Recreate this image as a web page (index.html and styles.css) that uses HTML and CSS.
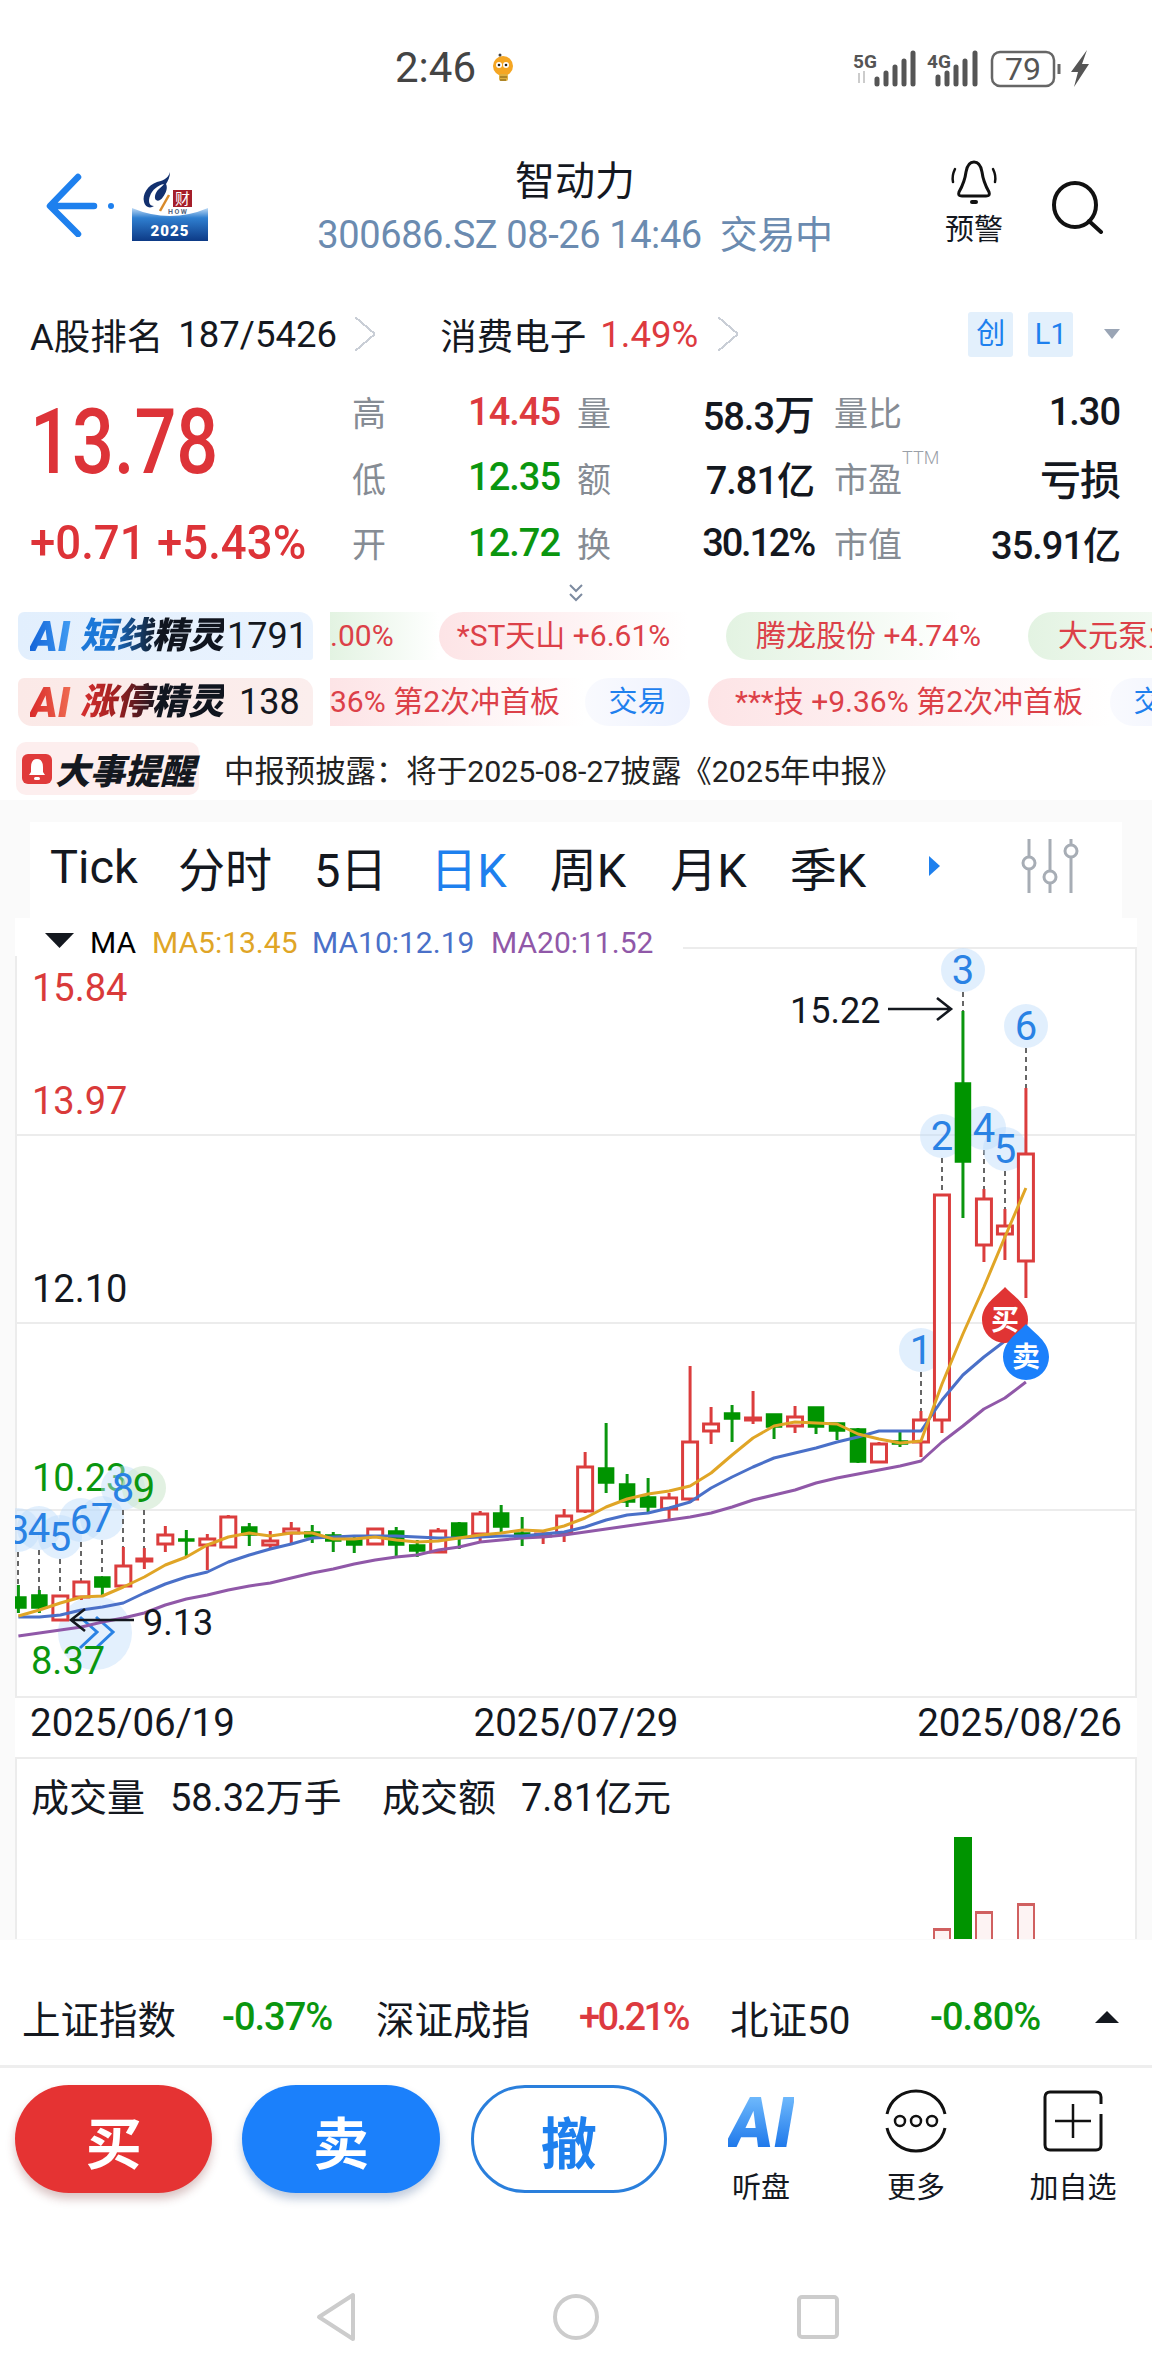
FILE: index.html
```html
<!DOCTYPE html>
<html lang="zh">
<head>
    <meta charset="UTF-8">
    <meta name="viewport" content="width=device-width, initial-scale=1.0">
    <title>智动力</title>
    <link rel="stylesheet" href="styles.css">
</head>
<body>
    <div class="status">
        <span class="time">2:46</span>
        <svg class="bee" width="24" height="30" viewBox="0 0 24 30">
            <circle cx="12" cy="13" r="10" fill="#f5a623"/>
            <rect x="8" y="21" width="9" height="7" rx="2" fill="#e0b040"/>
            <path d="M9 24h7M9 27h6" stroke="#7a5a10" stroke-width="1.2"/>
            <circle cx="8" cy="12" r="3" fill="#fff"/>
            <circle cx="15" cy="12" r="3" fill="#fff"/>
            <circle cx="8" cy="12" r="1.3" fill="#222"/>
            <circle cx="15" cy="12" r="1.3" fill="#222"/>
            <circle cx="9" cy="2" r="1.5" fill="#444"/>
        </svg>
        <svg class="sys" width="240" height="42" viewBox="853 46 240 42">
            <text class="net" x="853" y="67">5G</text>
            <path d="M859 72v10M864 70v12" stroke="#ccc" stroke-width="2"/>
            <path d="M877 78v5M886 72v11M895 66v17M904 60v23M913 52v31" stroke="#555" stroke-width="5" stroke-linecap="round"/>
            <text class="net" x="927" y="67">4G</text>
            <path d="M938 76v7M947 72v11M956 66v17M965 60v23M975 52v31" stroke="#555" stroke-width="5" stroke-linecap="round"/>
            <rect x="992" y="51" width="62" height="34" rx="8" fill="none" stroke="#666" stroke-width="2.5"/>
            <text class="batt" x="1023" y="79">79</text>
            <path d="M1059 63v10" stroke="#666" stroke-width="3"/>
            <path d="M1087 49l-16 22h7l-4 15 15-23h-7z" fill="#555"/>
        </svg>
    </div>

    <header class="top">
        <svg class="back" width="84" height="64" viewBox="0 0 84 64">
            <path d="M32 4L4 33l28 28M6 33h42" fill="none" stroke="#1e80ee" stroke-width="6.5" stroke-linecap="round" stroke-linejoin="round"/>
            <circle cx="65" cy="33" r="3" fill="#1e80ee"/>
        </svg>
        <svg class="logo" width="76" height="72" viewBox="0 0 76 72">
            <defs>
                <linearGradient id="logoBlue" x1="0" y1="0" x2="0" y2="1">
                    <stop offset="0" stop-color="#bcd9f5"/>
                    <stop offset="0.3" stop-color="#2f7fd0"/>
                    <stop offset="1" stop-color="#0d3a86"/>
                </linearGradient>
            </defs>
            <path d="M0 38q38 16 76 0v33H0z" fill="url(#logoBlue)"/>
            <path d="M38 2C36 9 30 11 25 12C16 15 10 24 12 32C13 37 18 39 22 36C17 36 16 31 18 26C20 20 26 15 32 14C29 18 24 20 23 26C22 31 27 33 31 27C34 23 36 18 34 14C36 11 38 7 38 2Z" fill="#12306e"/>
            <path d="M37 25L28 41" fill="none" stroke="#d88a2a" stroke-width="2.5"/>
            <rect x="41" y="20" width="19" height="17" fill="#a51e2a"/>
            <text class="logo-cai" x="50.5" y="34">财</text>
            <text class="logo-how" x="36" y="44">HOW</text>
            <text class="logo-year" x="38" y="66">2025</text>
        </svg>
        <div class="title">
            <div class="name">智动力</div>
            <div class="code">300686.SZ 08-26 14:46&nbsp; 交易中</div>
        </div>
        <div class="alert">
            <svg width="48" height="50" viewBox="0 0 48 50">
                <path d="M24 3c-5 0-7 4-8 10-1 8-3 13-7 20-1 3 0 4 3 4h24c3 0 4-1 3-4-4-7-6-12-7-20-1-6-3-10-8-10z" fill="none" stroke="#111" stroke-width="3"/>
                <path d="M5 10c-2 4-3 8-2 13M43 10c2 4 3 8 2 13" fill="none" stroke="#111" stroke-width="2.5" stroke-linecap="round"/>
                <rect x="20" y="41" width="8" height="4" rx="2" fill="#111"/>
            </svg>
            <span>预警</span>
        </div>
        <svg class="search" width="54" height="54" viewBox="0 0 54 54">
            <ellipse cx="24" cy="25" rx="21" ry="22" fill="none" stroke="#111" stroke-width="4"/>
            <path d="M38 41l12 11" stroke="#111" stroke-width="4" stroke-linecap="round"/>
        </svg>
    </header>

    <div class="rank">
        <span class="rank-a">A股排名</span>
        <span class="rank-n">187/5426</span>
        <span class="chev"></span>
        <span class="rank-b">消费电子</span>
        <span class="rank-p">1.49%</span>
        <span class="chev"></span>
        <span class="tag tag-first">创</span>
        <span class="tag">L1</span>
        <span class="tri-down"></span>
    </div>

    <section class="quote">
        <div class="price">
            <div class="last">13.78</div>
            <div class="delta">+0.71 +5.43%</div>
        </div>
        <div class="stats">
            <span class="lab lab-first">高</span><span class="val up">14.45</span>
            <span class="lab">量</span><span class="val">58.3<i class="cn">万</i></span>
            <span class="lab">量比</span><span class="val">1.30</span>

            <span class="lab lab-first">低</span><span class="val down">12.35</span>
            <span class="lab">额</span><span class="val">7.81亿</span>
            <span class="lab lab-ttm">市盈<i class="ttm">TTM</i></span><span class="val"><i class="cn">亏损</i></span>

            <span class="lab lab-first">开</span><span class="val down">12.72</span>
            <span class="lab">换</span><span class="val val-tight">30.12%</span>
            <span class="lab">市值</span><span class="val">35.91亿</span>
        </div>
    </section>

    <div class="more">
        <svg width="16" height="20" viewBox="0 0 16 20">
            <path d="M2 2l6 6 6-6M2 11l6 6 6-6" fill="none" stroke="#7d8ba0" stroke-width="2"/>
        </svg>
    </div>

    <div class="ai-row">
        <div class="ai-badge ai-blue"><b class="ai-mark">AI</b><b class="ai-name">短线精灵</b><span class="ai-count">1791</span></div>
        <div class="ticks">
            <span class="chip chip-green chip-cut">.00%</span>
            <span class="chip chip-pink w249">*ST天山 +6.61%</span>
            <span class="chip chip-green w234">腾龙股份 +4.74%</span>
            <span class="chip chip-green w234 chip-gap">大元泵业 +3.12%</span>
        </div>
    </div>
    <div class="ai-row ai-row2">
        <div class="ai-badge ai-red"><b class="ai-mark ai-mark-red">AI</b><b class="ai-name">涨停精灵</b><span class="ai-count">138</span></div>
        <div class="ticks ticks-tight">
            <span class="chip chip-pink chip-cut w255">36% 第2次冲首板</span>
            <span class="chip-trade">交易</span>
            <span class="chip chip-pink w402">***技 +9.36% 第2次冲首板</span>
            <span class="chip-trade">交易</span>
        </div>
    </div>
    <div class="event">
        <div class="event-badge">
            <svg width="30" height="30" viewBox="0 0 30 30">
                <rect width="30" height="30" rx="6" fill="#e03a3a"/>
                <path d="M15 5c-4 0-6 3-6 8v5l-2 3h16l-2-3v-5c0-5-2-8-6-8z" fill="#fff"/>
                <rect x="12" y="23" width="6" height="3" rx="1.5" fill="#fff"/>
            </svg>
            <b>大事提醒</b>
        </div>
        <span class="event-text">中报预披露：将于2025-08-27披露《2025年中报》</span>
    </div>

    <section class="market">
        <nav class="tabs">
            <span class="tab tab-tick">Tick</span>
            <span class="tab tab-fs">分时</span>
            <span class="tab tab-5">5日</span>
            <span class="tab tab-d">日K</span>
            <span class="tab tab-w">周K</span>
            <span class="tab tab-m">月K</span>
            <span class="tab tab-q">季K</span>
            <span class="tab-arrow"></span>
            <svg class="tab-set" width="58" height="54" viewBox="0 0 58 54">
                <path d="M8 0v18M8 30v24M29 0v32M29 44v10M50 0v6M50 18v36" stroke="#a7adb5" stroke-width="3"/>
                <circle cx="8" cy="24" r="6" fill="none" stroke="#a7adb5" stroke-width="3"/>
                <circle cx="29" cy="38" r="6" fill="none" stroke="#a7adb5" stroke-width="3"/>
                <circle cx="50" cy="12" r="6" fill="none" stroke="#a7adb5" stroke-width="3"/>
            </svg>
        </nav>
        <div class="chart-box" id="chart"></div>
        <div class="dates">
            <span>2025/06/19</span>
            <span>2025/07/29</span>
            <span>2025/08/26</span>
        </div>
        <div class="volume">
            <div class="vol-text">
                <span class="vol-a">成交量</span><span class="vol-b">58.32万手</span>
                <span class="vol-c">成交额</span><span class="vol-d">7.81亿元</span>
            </div>
            <div class="bars">
                <span class="bar bar-red bar-h11"></span>
                <span class="bar bar-green"></span>
                <span class="bar bar-red bar-h28"></span>
                <span class="bar bar-none"></span>
                <span class="bar bar-red bar-h36"></span>
            </div>
        </div>
    </section>

    <div class="index">
        <span class="idx-name">上证指数</span><span class="idx-val down">-0.37%</span>
        <span class="idx-name">深证成指</span><span class="idx-val idx-tight up">+0.21%</span>
        <span class="idx-name">北证50</span><span class="idx-val down">-0.80%</span>
        <span class="tri-up"></span>
    </div>

    <div class="actions">
        <button class="btn btn-buy">买</button>
        <button class="btn btn-sell">卖</button>
        <button class="btn btn-cancel">撤</button>
        <div class="tools">
            <div class="tool">
                <b class="tool-ai">AI</b>
                <span>听盘</span>
            </div>
            <div class="tool">
                <svg width="64" height="66" viewBox="0 0 64 66">
                    <path d="M3 26C6 12 18 3 32 3s26 9 29 23M3 40c3 14 15 23 29 23s26-9 29-23" fill="none" stroke="#111" stroke-width="3"/>
                    <circle cx="16" cy="33" r="5" fill="none" stroke="#111" stroke-width="2.5"/>
                    <circle cx="32" cy="33" r="5" fill="none" stroke="#111" stroke-width="2.5"/>
                    <circle cx="48" cy="33" r="5" fill="none" stroke="#111" stroke-width="2.5"/>
                </svg>
                <span>更多</span>
            </div>
            <div class="tool">
                <svg width="64" height="66" viewBox="0 0 64 66">
                    <path d="M60 16V9c0-3-2-5-5-5H9C6 4 4 6 4 9v48c0 3 2 5 5 5h46c3 0 5-2 5-5V26" fill="none" stroke="#111" stroke-width="3"/>
                    <path d="M32 16v34M14 33h36" stroke="#111" stroke-width="2.5"/>
                </svg>
                <span>加自选</span>
            </div>
        </div>
    </div>

    <div class="navbar">
        <svg width="44" height="52" viewBox="0 0 44 52">
            <path d="M39 4v44L5 26z" fill="none" stroke="#ccc" stroke-width="4" stroke-linejoin="round"/>
        </svg>
        <svg width="48" height="52" viewBox="0 0 48 52">
            <circle cx="24" cy="26" r="21" fill="none" stroke="#ccc" stroke-width="4"/>
        </svg>
        <svg width="44" height="48" viewBox="0 0 44 48">
            <rect x="3" y="4" width="38" height="40" rx="3" fill="none" stroke="#ccc" stroke-width="4"/>
        </svg>
    </div>

    <script src="chart.js"></script>
</body>
</html>
```
FILE: styles.css
```css
* {
    box-sizing: border-box;
}
body {
    margin: 0;
    width: 1152px;
    height: 2376px;
    overflow: hidden;
    background: #fff;
    color: #14181f;
    font-family: Roboto, "Noto Sans CJK SC", sans-serif;
}
.up { color: #dd3a3f; }
.down { color: #0a960f; }

/* status bar */
.status {
    height: 90px;
    display: flex;
    align-items: center;
    padding: 45px 0 0 395px;
}
.time {
    font-size: 42px;
    line-height: 45px;
    color: #444;
}
.bee {
    margin-left: 15px;
}
.sys {
    margin-left: 338px;
}
.net {
    font-size: 19px;
    font-weight: 700;
    fill: #555;
}
.batt {
    font-size: 32px;
    fill: #555;
    text-anchor: middle;
}

/* header */
.top {
    height: 220px;
    padding: 0 0 0 46px;
    display: flex;
    position: relative;
}
.back {
    margin-top: 83px;
}
.logo {
    margin: 80px 0 0 2px;
}
.logo-cai {
    font-size: 15px;
    fill: #fff;
    text-anchor: middle;
}
.logo-how {
    font-size: 7px;
    font-weight: 700;
    letter-spacing: 1.5px;
    fill: #56677f;
}
.logo-year {
    font-size: 15px;
    font-weight: 900;
    letter-spacing: 1px;
    fill: #fff;
    text-anchor: middle;
}
.title {
    width: 530px;
    margin: 64px 0 0 102px;
    text-align: center;
}
.name {
    font-size: 40px;
    line-height: 56px;
}
.code {
    font-size: 38px;
    line-height: 50px;
    color: #6b8bb0;
    white-space: nowrap;
    letter-spacing: -0.4px;
}
.alert {
    margin: 69px 0 0 104px;
    width: 60px;
    display: flex;
    flex-direction: column;
    align-items: center;
}
.alert span {
    font-size: 29px;
    line-height: 36px;
    margin-top: 3px;
    white-space: nowrap;
}
.search {
    margin: 90px 0 0 47px;
}

/* rank line */
.rank {
    height: 45px;
    display: flex;
    align-items: center;
    padding: 3px 0 0 30px;
    font-size: 36.5px;
}
.rank-n {
    margin-left: 15px;
    width: 177px;
    white-space: nowrap;
}
.chev {
    width: 14px;
    height: 14px;
}
.rank .chev {
    width: 20px;
    height: 34px;
    background: linear-gradient(to top right, transparent 46%, #c9ced6 46%, #c9ced6 54%, transparent 54%) 0 0/100% 50% no-repeat,
                linear-gradient(to bottom right, transparent 46%, #c9ced6 46%, #c9ced6 54%, transparent 54%) 0 100%/100% 50% no-repeat;
}
.rank-b {
    margin-left: 65px;
}
.rank-p {
    margin-left: 14px;
    width: 118px;
    color: #dd3a3f;
}
.tag {
    width: 45px;
    height: 45px;
    margin-left: 15px;
    border-radius: 3px;
    background: #e3f0fc;
    color: #1e80ee;
    font-size: 29px;
    line-height: 45px;
    text-align: center;
}
.tag-first {
    margin-left: 230px;
}
.tri-down {
    margin-left: 31px;
    border: 8px solid transparent;
    border-top: 10px solid #9aa5b5;
    border-bottom: 0;
}

/* price block */
.quote {
    display: flex;
    height: 197px;
    margin-top: 24px;
}
.price {
    width: 352px;
    padding: 14px 0 0 30px;
}
.last {
    font-size: 90px;
    font-weight: 500;
    line-height: 100px;
    color: #dd3338;
    transform: scaleX(0.82);
    transform-origin: left;
    white-space: nowrap;
}
.delta {
    margin-top: 17px;
    font-size: 49px;
    font-weight: 500;
    line-height: 66px;
    color: #dd3338;
    transform: scaleX(0.93);
    transform-origin: left;
    white-space: nowrap;
}
.stats {
    display: grid;
    grid-template-columns: 34px 174px 51px 203px 88px 218px;
    grid-auto-rows: 65.5px;
    align-items: center;
}
.lab {
    font-size: 34px;
    color: #868c94;
    text-align: right;
    white-space: nowrap;
}
.lab-first {
    text-align: left;
}
.lab-ttm {
    position: relative;
}
.ttm {
    position: absolute;
    left: 100%;
    top: -6px;
    font-style: normal;
    font-size: 18px;
    font-weight: 300;
    color: #9aa0a8;
}
.val {
    font-size: 38px;
    font-weight: 500;
    letter-spacing: -1px;
    text-align: right;
    white-space: nowrap;
}
.val-tight {
    letter-spacing: -2.2px;
}
.cn {
    font-style: normal;
    font-size: 41px;
}

.more {
    height: 36px;
    display: flex;
    justify-content: center;
    padding-top: 7px;
}

/* AI rows */
.ai-row {
    display: flex;
    height: 48px;
}
.ai-row2 {
    margin-top: 18px;
}
.ai-badge {
    width: 295px;
    margin-left: 18px;
    border-radius: 6px 14px 3px 14px;
    display: flex;
    align-items: center;
    padding-left: 12px;
    white-space: nowrap;
}
.ai-blue {
    background: linear-gradient(90deg, #e2effd, #eaf3fe);
}
.ai-red {
    background: linear-gradient(90deg, #fbe9e7, #fbeeed);
}
.ai-mark {
    width: 50px;
    font-size: 42px;
    font-weight: 900;
    font-style: italic;
    background: linear-gradient(90deg, #1464d8, #4aa8f8);
    -webkit-background-clip: text;
    background-clip: text;
    color: transparent;
}
.ai-mark-red {
    background-image: linear-gradient(90deg, #d92a2a, #f47a5a);
}
.ai-name {
    font-size: 36px;
    font-weight: 900;
    font-style: italic;
    line-height: 48px;
    background: linear-gradient(90deg, #1c78d8, #1c78d8 20%, #10151f 55%);
    -webkit-background-clip: text;
    background-clip: text;
    color: transparent;
}
.ai-red .ai-name {
    background-image: linear-gradient(90deg, #d93030, #a02020 25%, #10151f 55%);
}
.ai-count {
    font-size: 36px;
    margin-left: 3px;
}
.ai-red .ai-count {
    margin-left: 15px;
}
.ticks {
    flex: 1;
    margin-left: 17px;
    display: flex;
    overflow: hidden;
    white-space: nowrap;
}
.chip {
    flex: none;
    height: 48px;
    line-height: 48px;
    border-radius: 24px 0 0 24px;
    font-size: 30px;
    color: #dc4048;
    text-align: center;
}
.chip-pink {
    background: linear-gradient(90deg, #fde4e6, #fff);
}
.chip-green {
    background: linear-gradient(90deg, #e3f3e2, #fff);
}
.chip-cut {
    width: 109px;
    border-radius: 0;
    text-align: left;
}
.chip-gap {
    text-align: left;
}
.w249 { width: 249px; }
.w234 { width: 234px; margin-left: 38px; text-align: left; padding-left: 30px; overflow: visible; }
.w255 { width: 255px; }
.w402 { width: 402px; margin-left: 18px; }
.ticks .w234.chip-gap { margin-left: 68px; }
.chip-trade {
    flex: none;
    width: 105px;
    height: 48px;
    line-height: 48px;
    border-radius: 24px;
    background: linear-gradient(90deg, #f9fafe, #eef2fe);
    color: #1e80ee;
    font-size: 29px;
    text-align: center;
}
.event {
    height: 53px;
    margin-top: 16px;
    display: flex;
    align-items: center;
    padding-left: 16px;
}
.event-badge {
    width: 183px;
    height: 53px;
    display: flex;
    align-items: center;
    gap: 3px;
    padding-left: 6px;
    border-radius: 10px;
    background: #fdeeee;
    font-size: 35px;
    white-space: nowrap;
}
.event-badge svg {
    flex: none;
}
.event-badge b {
    font-weight: 900;
    font-style: italic;
}
.event-text {
    margin-left: 25px;
    font-size: 30.4px;
    color: #222;
    white-space: nowrap;
}

/* chart area */
.market {
    height: 1140px;
    margin-top: 5px;
    background: #fafafa;
    padding-top: 22px;
    overflow: hidden;
}
.tabs {
    height: 96px;
    margin: 0 30px;
    padding-bottom: 8px;
    background: #fff;
    display: flex;
    align-items: center;
    position: relative;
    font-size: 47px;
}
.tab {
    white-space: nowrap;
}
.tab-tick { margin-left: 20px; }
.tab-fs { margin-left: 40px; }
.tab-5 { margin-left: 42px; }
.tab-d { margin-left: 43px; color: #1e80ee; }
.tab-w { margin-left: 43px; }
.tab-m { margin-left: 44px; }
.tab-q { margin-left: 43px; }
.tab-arrow {
    margin-left: 63px;
    border-left: 11px solid #1e80ee;
    border-top: 10px solid transparent;
    border-bottom: 10px solid transparent;
}
.tab-set {
    margin-left: 81px;
}
.chart-box {
    height: 781px;
    margin: 0 15px;
    background: #fff;
}
.chart-box svg {
    display: block;
}
.grid-line {
    fill: none;
    stroke: #ececec;
    stroke-width: 2;
}
.legend-mask {
    fill: #fff;
}
.legend {
    font-size: 30px;
}
.ma5 { fill: #e0a526; }
.ma10 { fill: #4a70c8; }
.ma20 { fill: #9058a8; }
.axis {
    font-size: 38px;
}
.axis-red { fill: #d93a3a; }
.axis-black { fill: #14181f; }
.axis-green { fill: #0a960f; }
.line-ma5, .line-ma10, .line-ma20 {
    fill: none;
    stroke-width: 3;
    stroke-linejoin: round;
}
.line-ma5 { stroke: #e0a526; }
.line-ma10 { stroke: #4a70c8; }
.line-ma20 { stroke: #9058a8; }
.wick-r { stroke: #db3d3d; stroke-width: 3; }
.wick-g { stroke: #0a960f; stroke-width: 3; }
.body-r { fill: #fff; stroke: #db3d3d; stroke-width: 3; }
.body-g { fill: #009400; stroke: #009400; stroke-width: 1.5; }
.dash {
    stroke: #666;
    stroke-width: 2;
    stroke-dasharray: 5 4;
}
.dot-bg { fill: #bcdcfb; fill-opacity: 0.45; }
.dot-bg-g { fill: #cfe8cf; fill-opacity: 0.6; }
.dot-num {
    font-size: 40px;
    text-anchor: middle;
    fill: #2a82e4;
}
.dot-num-g { fill: #0a960f; }
.note {
    font-size: 36px;
    fill: #14181f;
}
.note-line {
    fill: none;
    stroke: #14181f;
    stroke-width: 2.6;
}
.dbl-bg { fill: #e3f0fd; }
.dbl {
    fill: none;
    stroke: #2a82e4;
    stroke-width: 3;
}
.drop-buy { fill: #e03434; }
.drop-sell { fill: #1b80fb; }
.drop-text {
    font-size: 28px;
    font-weight: 700;
    fill: #fff;
    text-anchor: middle;
}
.dates {
    height: 58px;
    margin: 0 15px;
    padding: 0 15px 12px;
    background: #fff;
    display: flex;
    justify-content: space-between;
    align-items: center;
    font-size: 38.5px;
}
.volume {
    height: 182px;
    margin: 0 15px;
    background: #fff;
    border: 2px solid #ececec;
    border-bottom: 0;
    position: relative;
    overflow: hidden;
}
.vol-text {
    padding: 14px 0 0 14px;
    font-size: 38px;
    line-height: 50px;
    white-space: nowrap;
}
.vol-b { margin-left: 25px; }
.vol-c { margin-left: 31px; }
.vol-d { margin-left: 25px; }
.bars {
    position: absolute;
    left: 916px;
    bottom: 0;
    display: flex;
    align-items: flex-end;
    gap: 3px;
}
.bar {
    width: 18px;
}
.bar-green {
    height: 102px;
    background: #009400;
}
.bar-red {
    border: 2px solid #d06060;
    border-bottom: 0;
    border-top-width: 3px;
    background: #fdf3f3;
}
.bar-none { width: 18px; height: 0; }
.bar-h11 { height: 11px; }
.bar-h28 { height: 28px; }
.bar-h36 { height: 36px; }

/* index bar */
.index {
    height: 128px;
    padding: 29px 0 0 22px;
    border-bottom: 3px solid #eee;
    display: grid;
    grid-template-columns: 200px 154px 203px 151px 200px 165px 24px;
    align-items: center;
    white-space: nowrap;
}
.idx-name {
    font-size: 38.5px;
}
.idx-val {
    font-size: 38px;
    font-weight: 500;
    letter-spacing: -1px;
}
.idx-tight {
    letter-spacing: -2.6px;
}
.tri-up {
    width: 0;
    border: 12px solid transparent;
    border-top: 0;
    border-bottom: 12px solid #14181f;
}

/* bottom actions */
.actions {
    height: 157px;
    padding: 17px 0 0 15px;
    display: flex;
    align-items: flex-start;
}
.btn {
    width: 198px;
    height: 108px;
    border: 0;
    border-radius: 54px;
    font-family: Roboto, "Noto Sans CJK SC", sans-serif;
    font-size: 56px;
    font-weight: 700;
    color: #fff;
}
.btn-buy {
    background: #e53333;
    box-shadow: 0 6px 10px rgba(120, 40, 40, 0.28);
}
.btn-sell {
    margin-left: 30px;
    background: #1b80fb;
    box-shadow: 0 6px 10px rgba(30, 70, 130, 0.28);
}
.btn-cancel {
    margin-left: 31px;
    width: 197px;
    background: #fff;
    border: 3px solid #2a7fdc;
    color: #1e80ee;
}
.tools {
    display: grid;
    grid-template-columns: 154px 156px 158px;
    margin-left: 17px;
}
.tool {
    display: flex;
    flex-direction: column;
    align-items: center;
    height: 122px;
    font-size: 29px;
    white-space: nowrap;
}
.tool svg {
    height: 66px;
    margin-top: 3px;
}
.tool span {
    margin-top: 17px;
    line-height: 34px;
}
.tool-ai {
    height: 66px;
    margin-top: 3px;
    font-size: 70px;
    font-weight: 900;
    font-style: italic;
    line-height: 70px;
    background: linear-gradient(180deg, #7cc4ff, #1570e8);
    -webkit-background-clip: text;
    background-clip: text;
    color: transparent;
}

.navbar {
    display: flex;
    align-items: center;
    height: 56px;
    margin-top: 64px;
    padding-left: 314px;
    gap: 0;
}
.navbar svg:nth-child(2) {
    margin-left: 194px;
}
.navbar svg:nth-child(3) {
    margin-left: 196px;
}
```
FILE: chart.js
```js
// candles: color, body top, body bottom, wick top, wick bottom (page y)
const candles = [
    ["g",1597,1608,1585,1613],["g",1595,1608,1590,1613],["r",1596,1620,1596,1620],["r",1582,1597,1582,1600],
    ["g",1577,1587,1577,1595],["r",1566,1586,1547,1587],["r",1559,1561,1548,1569],["r",1535,1544,1526,1552],
    ["g",1539,1541,1530,1557],["r",1539,1545,1534,1570],["r",1517,1547,1515,1547],["g",1527,1535,1523,1546],
    ["r",1541,1545,1531,1548],["r",1529,1533,1522,1543],["g",1532,1537,1525,1543],["g",1535,1541,1532,1552],
    ["g",1539,1545,1537,1553],["r",1529,1544,1529,1544],["g",1531,1545,1527,1557],["g",1545,1551,1540,1557],
    ["r",1531,1552,1528,1553],["g",1523,1537,1522,1549],["r",1514,1534,1511,1543],["g",1513,1527,1505,1532],
    ["g",1533,1537,1517,1546],["r",1534,1536,1530,1544],["r",1516,1533,1509,1542],["r",1467,1511,1452,1513],
    ["g",1468,1483,1423,1493],["g",1484,1502,1474,1507],["g",1497,1507,1478,1512],["r",1498,1509,1493,1520],
    ["r",1442,1499,1366,1503],["r",1424,1431,1407,1444],["g",1413,1419,1405,1442],["r",1418,1420,1391,1424],
    ["g",1414,1427,1414,1439],["r",1417,1426,1406,1433],["g",1407,1427,1407,1434],["g",1423,1431,1423,1440],
    ["g",1429,1462,1428,1463],["r",1444,1462,1442,1463],["g",1441,1444,1430,1447],["r",1420,1442,1411,1457],
    ["r",1195,1420,1195,1433],["g",1083,1162,1011,1218],["r",1199,1245,1189,1262],["r",1226,1234,1209,1260],
    ["r",1154,1261,1088,1298]
];

const ma5 = [1616,1610,1603,1597,1596,1587,1577,1565,1557,1545,1537,1533,1536,1533,1533,1539,1539,1537,1540,1542,1541,1538,1535,1533,1530,1531,1526,
    1518,1507,1499,1494,1491,1486,1473,1455,1438,1426,1422,1423,1424,1434,1439,1443,1441,1384,1334,1287,1237,1188];
const ma10 = [1617,1617,1615,1610,1607,1603,1593,1584,1577,1572,1562,1555,1549,1544,1538,1537,1536,1536,1536,1537,1538,1538,1537,1536,1536,1534,1532,
    1527,1520,1515,1513,1508,1502,1488,1477,1467,1458,1453,1448,1442,1437,1431,1431,1431,1400,1375,1357,1341,1325];
const ma20 = [1636,1633,1630,1627,1622,1618,1613,1605,1599,1595,1590,1586,1583,1578,1573,1569,1564,1560,1557,1555,1550,1547,1542,1540,1538,1537,1535,
    1532,1529,1526,1523,1520,1517,1513,1507,1500,1495,1490,1483,1478,1474,1470,1466,1461,1442,1426,1409,1398,1382];

const colX = i => 18.4 + 20.99 * i;
const linePts = arr => arr.map((y, i) => colX(i).toFixed(1) + "," + y).join(" ");

let out = "";

// grid
[948, 1135, 1323, 1510, 1697].forEach(y => {
    out += `<line class="grid-line" x1="15" x2="1137" y1="${y}" y2="${y}"/>`;
});
out += `<path class="grid-line" d="M16 948V1697M1136 948V1697"/>`;

// axis prices
out += `<text class="axis axis-red" x="32" y="1001">15.84</text>`;
out += `<text class="axis axis-red" x="32" y="1114">13.97</text>`;
out += `<text class="axis axis-black" x="32" y="1302">12.10</text>`;
out += `<text class="axis axis-green" x="32" y="1491">10.23</text>`;

// numbered markers: label, x, y, dash end
const marks = [
    ["3",18,1530,1585],["4",39,1528,1590],["5",60,1537,1596],["6",81,1520,1582],["7",102,1518,1577],
    ["8",123,1488,1547],["9",144,1488,1548],
    ["1",921,1350,1411],["2",942,1136,1195],["3",963,970,1011],["4",984,1128,1189],["5",1005,1149,1209],["6",1026,1026,1088]
];
marks.forEach((m, i) => {
    out += `<line class="dash" x1="${m[1]}" x2="${m[1]}" y1="${m[2] + 22}" y2="${m[3]}"/>`;
    out += `<circle class="${i === 6 ? "dot-bg-g" : "dot-bg"}" cx="${m[1]}" cy="${m[2]}" r="22"/>`;
});

// double chevron circle at the left edge
out += `<circle class="dbl-bg" cx="95" cy="1633" r="37"/>`;
out += `<path class="dbl" d="M80 1617l17 15-17 16M96 1617l17 15-17 16"/>`;
out += `<text class="axis axis-green" x="31" y="1674">8.37</text>`;

// candles
candles.forEach((c, i) => {
    const x = colX(i);
    out += `<line class="wick-${c[0]}" x1="${x}" x2="${x}" y1="${c[3]}" y2="${c[4]}"/>`;
    out += `<rect class="body-${c[0]}" x="${x - 7.5}" y="${c[1]}" width="15" height="${c[2] - c[1]}"/>`;
});

// moving averages
out += `<polyline class="line-ma20" points="${linePts(ma20)}"/>`;
out += `<polyline class="line-ma10" points="${linePts(ma10)}"/>`;
out += `<polyline class="line-ma5" points="${linePts(ma5)}"/>`;

// marker numbers
marks.forEach((m, i) => {
    out += `<text class="dot-num${i === 6 ? " dot-num-g" : ""}" x="${m[1]}" y="${m[2] + 14}">${m[0]}</text>`;
});

// high / low notes
out += `<text class="note" x="790" y="1023">15.22</text>`;
out += `<path class="note-line" d="M888 1009H950M937 998l14 11-14 11"/>`;
out += `<text class="note" x="143" y="1635">9.13</text>`;
out += `<path class="note-line" d="M134 1620H72M85 1609l-14 11 14 11"/>`;

// buy / sell drops
const drop = (cx, cy) =>
    `M${cx} ${cy - 33}C${cx + 8} ${cy - 24} ${cx + 23} ${cy - 16} ${cx + 23} ${cy}A23 23 0 1 1 ${cx - 23} ${cy}C${cx - 23} ${cy - 16} ${cx - 8} ${cy - 24} ${cx} ${cy - 33}Z`;
out += `<path class="drop-buy" d="${drop(1005, 1320)}"/>`;
out += `<text class="drop-text" x="1005" y="1330">买</text>`;
out += `<path class="drop-sell" d="${drop(1026, 1357)}"/>`;
out += `<text class="drop-text" x="1026" y="1367">卖</text>`;

// legend
out += `<rect class="legend-mask" x="15" y="918" width="668" height="38"/>`;
out += `<path d="M45 933h29l-14.5 15z" fill="#14181f"/>`;
out += `<text class="legend" x="90" y="953">MA</text>`;
out += `<text class="legend ma5" x="152" y="953">MA5:13.45</text>`;
out += `<text class="legend ma10" x="312" y="953">MA10:12.19</text>`;
out += `<text class="legend ma20" x="491" y="953">MA20:11.52</text>`;

document.getElementById("chart").innerHTML =
    `<svg width="1122" height="781" viewBox="15 918 1122 781">${out}</svg>`;
```
